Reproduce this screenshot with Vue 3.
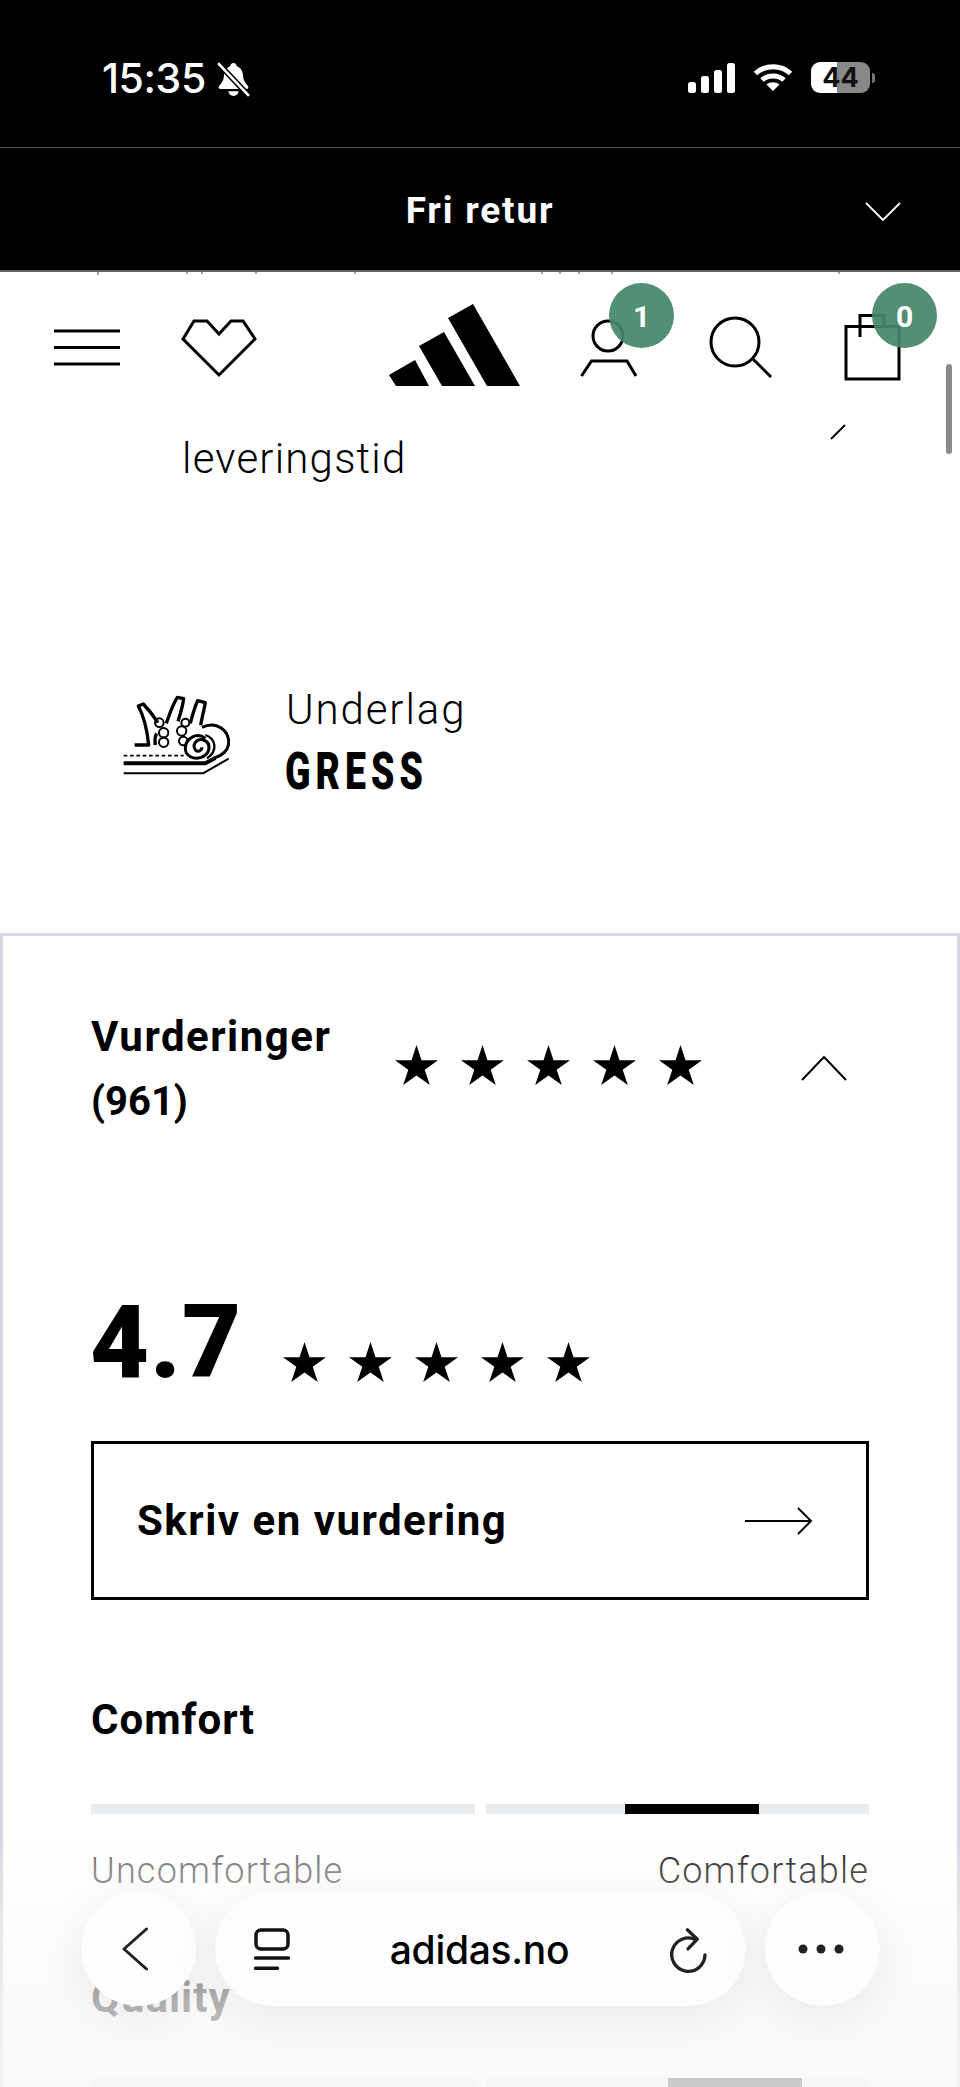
<script setup>
const stars = [1, 2, 3, 4, 5]
</script>

<template>
  <div class="page">
    <div class="topbar">
      <div class="status">
        <div class="status-left">
          <span class="time">15:35</span>
          <svg class="bell" viewBox="0 0 32 34" width="33" height="35">
            <path d="M16 1c2 0 3 1.500 3.300 3.200 4 1.400 5.700 5 6 9.300.2 4 1.700 6.400 4.700 9.800 1 1.500.3 3-1.500 3H3.500c-1.800 0-2.500-1.500-1.500-3 3-3.400 4.500-5.800 4.700-9.800.3-4.300 2-7.900 6-9.300C13 2.500 14 1 16 1z" fill="#fff"/>
            <path d="M11 28.500h10c-.5 3-2.500 4.500-5 4.500s-4.500-1.500-5-4.500z" fill="#fff"/>
            <path d="M1 1l30 32" stroke="#000" stroke-width="5.500"/>
            <path d="M1 1l30 32" stroke="#fff" stroke-width="2.500"/>
          </svg>
        </div>
        <div class="status-right">
          <svg viewBox="0 0 47 30" width="47" height="30">
            <rect x="0" y="19" width="8" height="11" rx="2.500" fill="#fff"/>
            <rect x="13" y="13" width="8" height="17" rx="2.500" fill="#fff"/>
            <rect x="26" y="7" width="8" height="23" rx="2.500" fill="#fff"/>
            <rect x="39" y="0" width="8" height="30" rx="2.500" fill="#fff"/>
          </svg>
          <svg viewBox="0 0 40 28" width="40" height="28">
            <path d="M2.500 10.500C12 1.500 28 1.500 37.500 10.500" fill="none" stroke="#fff" stroke-width="5"/>
            <path d="M9 17c6-5.500 16-5.500 22 0" fill="none" stroke="#fff" stroke-width="5"/>
            <path d="M13.500 21.500c3.500-3 9.500-3 13 0L20 28z" fill="#fff"/>
          </svg>
          <div class="battery">
            <div class="battery-body"><span>44</span></div>
            <i class="battery-nub"></i>
          </div>
        </div>
      </div>
      <div class="promo">
        <span>Fri retur</span>
        <svg class="promo-chevron" viewBox="0 0 36 20" width="36" height="20">
          <path d="M1 2l17 17L35 2" fill="none" stroke="#fff" stroke-width="1.800"/>
        </svg>
      </div>
    </div>

    <header class="nav">
      <svg class="nav-art" viewBox="0 0 960 150" width="960" height="150">
        <path d="M98 0v3M187 0v2M202 0v2M256 0v2M355 0v2M542 0v2M560 0v2M579 0v2M612 0v2M839 0v2" stroke="#666" stroke-width="1.200"/>
        <g fill="none" stroke="#000" stroke-width="3">
          <path d="M54 59h66M54 75.500h66M54 92h66"/>
          <path d="M183 67l11-18h13l12 13 12-13h12l12 18-36 36z"/>
          <circle cx="608" cy="64" r="15"/>
          <path d="M581.500 104l10-15h35.500l9 15"/>
          <circle cx="735" cy="70" r="24"/>
          <path d="M753 87l18 18"/>
          <path d="M846 54.500h53V107h-53z"/>
          <path d="M860 65V43.500h24V55"/>
        </g>
        <g fill="#000">
          <path d="M389 103l26-15 14 26h-33z"/>
          <path d="M419 74l25-14 31 54h-33z"/>
          <path d="M448 46l25-14 47 82h-33z"/>
        </g>
      </svg>
      <span class="badge badge-user">1</span>
      <span class="badge badge-bag">0</span>
      <i class="scroll-thumb"></i>
    </header>

    <main class="content">
      <div class="delivery">
        <span class="delivery-text">leveringstid</span>
        <svg class="slash" viewBox="0 0 16 16" width="16" height="16">
          <path d="M1 15L15 1" stroke="#000" stroke-width="2"/>
        </svg>
      </div>

      <div class="surface">
        <svg class="surface-icon" viewBox="95 105 324 240" width="108" height="80">
          <g fill="none" stroke="#000" stroke-linejoin="round">
            <path d="M133 255h42c-4-40-14-85-31-117l15-6c16 17 32 38 44 56M195 255c-2-15-2-25 4-35" stroke-width="10"/>
            <path d="M228 190c10-28 18-55 33-78l19 4c-3 22-10 46-17 68M300 190c6-24 12-46 22-68l23 6c-4 22-10 45-14 68" stroke-width="10"/>
            <circle cx="207" cy="188" r="13" stroke-width="6"/>
            <circle cx="220" cy="218" r="14" stroke-width="6"/>
            <circle cx="220" cy="247" r="14" stroke-width="6"/>
            <circle cx="285" cy="188" r="12" stroke-width="6"/>
            <circle cx="274" cy="213" r="14" stroke-width="6"/>
            <circle cx="279" cy="243" r="13" stroke-width="6"/>
            <path d="M345 235C320 215 285 235 285 265 285 290 310 298 330 293 360 285 365 250 340 240 318 233 305 255 315 270 322 278 335 272 335 262" stroke-width="9"/>
            <path d="M335 202c45-22 82 12 80 48-3 30-30 40-45 45" stroke-width="9"/>
            <path d="M345 225c30 10 40 45 5 70" stroke-width="7"/>
            <path d="M100 287h180" stroke-width="5" stroke-dasharray="11 8"/>
            <path d="M100 310h245l30-16" stroke-width="12"/>
            <path d="M100 340h238l77-44" stroke-width="6"/>
          </g>
        </svg>
        <div class="surface-text">
          <span class="surface-label">Underlag</span>
          <span class="surface-value">GRESS</span>
        </div>
      </div>

      <section class="card">
        <div class="card-head">
          <h2 class="card-title">Vurderinger <span class="card-count">(961)</span></h2>
          <div class="stars">
            <svg v-for="s in stars" :key="s" viewBox="0 0 43 40" width="43" height="40"><path d="M21.500 0l5 15.300h16.500L29.700 24.700 34.800 40 21.500 30.500 8.200 40l5.100-15.300L0 15.300h16.500z" fill="#000"/></svg>
          </div>
          <svg class="chevron-up" viewBox="0 0 46 26" width="46" height="26">
            <path d="M1 25L23 2l22 23" fill="none" stroke="#000" stroke-width="2"/>
          </svg>
        </div>

        <div class="score">
          <span class="score-num">4.7</span>
          <div class="stars">
            <svg v-for="s in stars" :key="s" viewBox="0 0 43 40" width="43" height="40"><path d="M21.500 0l5 15.300h16.500L29.700 24.700 34.800 40 21.500 30.500 8.200 40l5.100-15.300L0 15.300h16.500z" fill="#000"/></svg>
          </div>
        </div>

        <button class="write">
          <span>Skriv en vurdering</span>
          <svg viewBox="0 0 68 28" width="68" height="28">
            <path d="M0 14h66M53 1l13 13-13 13" fill="none" stroke="#000" stroke-width="2"/>
          </svg>
        </button>

        <h3 class="metric-title">Comfort</h3>
        <div class="meter">
          <div class="meter-seg"></div>
          <div class="meter-seg"><i class="meter-fill"></i></div>
        </div>
        <div class="meter-labels">
          <span class="label-low">Uncomfortable</span>
          <span class="label-high">Comfortable</span>
        </div>

        <h3 class="metric-title metric-quality">Quality</h3>
        <div class="meter meter-second">
          <div class="meter-seg"></div>
          <div class="meter-seg"><i class="meter-fill meter-fill-2"></i></div>
        </div>
      </section>
    </main>

    <div class="fade"></div>

    <div class="browser">
      <div class="bbtn">
        <svg class="back" viewBox="0 0 26 44" width="26" height="44"><path d="M24.500 2L2 22l22.500 20" fill="none" stroke="#222" stroke-width="3" stroke-linecap="round" stroke-linejoin="round"/></svg>
      </div>
      <div class="pill">
        <svg class="tabs" viewBox="0 0 36 42" width="36" height="42">
          <rect x="2" y="2" width="32" height="19" rx="5" fill="none" stroke="#111" stroke-width="3.500"/>
          <path d="M1.500 30h33M1.500 40.200h22" stroke="#111" stroke-width="3.500" stroke-linecap="round"/>
        </svg>
        <span class="url">adidas.no</span>
        <svg class="reload" viewBox="565 130 120 140" width="40" height="47">
          <path d="M673 213A50 50 0 1 1 646 168" fill="none" stroke="#222" stroke-width="10" stroke-linecap="round"/>
          <path d="M620 138l30 28-28 29" fill="none" stroke="#222" stroke-width="10" stroke-linecap="round" stroke-linejoin="round"/>
        </svg>
      </div>
      <div class="bbtn">
        <svg class="dots" viewBox="0 0 46 10" width="46" height="10"><circle cx="5" cy="5" r="4.500" fill="#222"/><circle cx="23" cy="5" r="4.500" fill="#222"/><circle cx="41" cy="5" r="4.500" fill="#222"/></svg>
      </div>
    </div>
  </div>
</template>

<style>
html, body { margin: 0; padding: 0; background: #fff; }
</style>

<style scoped>
.page {
  position: relative;
  width: 960px;
  height: 2087px;
  overflow: hidden;
  background: #fff;
  color: #000;
  font-family: Roboto, "Liberation Sans", sans-serif;
}

.topbar { background: #000; color: #fff; height: 271px; }
.status {
  height: 148px;
  box-sizing: border-box;
  border-bottom: 1px solid #555;
  display: flex;
  justify-content: space-between;
  padding: 60px 85px 0 102px;
}
.status-left { display: flex; align-items: flex-start; gap: 11px; }
.time {
  font-family: Inter, sans-serif;
  font-size: 41px;
  font-weight: 500;
  line-height: 36px;
  letter-spacing: -0.4px;
}
.bell { margin-top: 2px; }
.status-right { display: flex; align-items: flex-start; gap: 18px; padding-top: 3px; }
.battery { display: flex; align-items: center; gap: 2px; margin-top: -1px; }
.battery-body {
  width: 59px;
  height: 31px;
  border-radius: 9px;
  background: linear-gradient(90deg, #fff 0 26px, #888 26px);
  color: #111;
  font: 700 27px/31px Inter, sans-serif;
  text-align: center;
}
.battery-nub { width: 3px; height: 10px; background: #777; border-radius: 0 3px 3px 0; }

.promo {
  position: relative;
  height: 122px;
  display: flex;
  align-items: center;
  justify-content: center;
  font-size: 37px;
  font-weight: 700;
  letter-spacing: 1.800px;
  padding-top: 2px;
  box-sizing: border-box;
}
.promo-chevron { position: absolute; right: 59px; top: 53px; }

.nav {
  position: relative;
  height: 129px;
  border-top: 2px solid #666;
  margin-top: -1px;
  background: #fff;
  z-index: 2;
}
.nav-art { position: absolute; left: 0; top: 0; overflow: visible; }
.badge {
  position: absolute;
  top: 11px;
  width: 65px;
  height: 65px;
  border-radius: 50%;
  background: rgba(70, 135, 105, 0.93);
  color: #fff;
  font-size: 30px;
  font-weight: 700;
  line-height: 68px;
  text-align: center;
}
.badge-user { left: 609px; }
.badge-bag { left: 872px; }
.scroll-thumb {
  position: absolute;
  left: 946px;
  top: 92px;
  width: 6px;
  height: 90px;
  border-radius: 3px;
  background: #8a8a8a;
}

.delivery { position: relative; height: 280px; }
.delivery-text {
  position: absolute;
  left: 182px;
  top: 33px;
  font-size: 42px;
  font-weight: 300;
  line-height: 50px;
  letter-spacing: 1.200px;
}
.slash { position: absolute; left: 830px; top: 23px; }

.surface {
  display: flex;
  align-items: flex-start;
  gap: 56px;
  height: 252px;
  box-sizing: border-box;
  padding-left: 122px;
}
.surface-icon { margin-top: 14px; }
.surface-text { display: flex; flex-direction: column; }
.surface-label { font-size: 42px; font-weight: 300; line-height: 58px; letter-spacing: 1.900px; }
.surface-value {
  display: inline-block;
  font-size: 52px;
  font-weight: 900;
  line-height: 66px;
  letter-spacing: 7px;
  transform: scaleX(0.72);
  transform-origin: left center;
  margin-left: -1px;
}

.card {
  box-sizing: border-box;
  border: 3px solid #d5d8df;
  padding: 0 88px 200px;
}
.card-head { position: relative; height: 210px; }
.card-title {
  position: absolute;
  left: 0;
  top: 69px;
  width: 270px;
  margin: 0;
  font-size: 42px;
  font-weight: 700;
  line-height: 64px;
  letter-spacing: 1.500px;
}
.card-count { font-size: 40px; letter-spacing: 0; }
.stars { display: flex; gap: 23px; }
.card-head .stars { position: absolute; left: 304px; top: 109px; }
.chevron-up { position: absolute; left: 710px; top: 119px; }

.score { display: flex; align-items: flex-end; gap: 41px; margin-top: 146px; height: 90px; }
.score-num {
  font-size: 102px;
  font-weight: 900;
  line-height: 90px;
  letter-spacing: 1px;
  margin: 0 0 -5px -1px;
}

.write {
  display: flex;
  align-items: center;
  justify-content: space-between;
  width: 100%;
  height: 159px;
  box-sizing: border-box;
  margin-top: 59px;
  padding: 0 53px 0 43px;
  background: #fff;
  border: 3px solid #000;
  border-radius: 0;
  font: 700 42px Roboto, sans-serif;
  letter-spacing: 1.500px;
  color: #000;
}
.metric-title {
  margin: 96px 0 0;
  font-size: 42px;
  font-weight: 700;
  line-height: 48px;
  letter-spacing: 1px;
}
.meter { display: grid; grid-template-columns: 1fr 1fr; gap: 11px; margin-top: 60px; }
.meter-seg { position: relative; height: 10px; background: #eaedf0; }
.meter-fill { position: absolute; left: 139px; width: 134px; top: 0; bottom: 0; background: #000; }
.meter-fill-2 { left: 182px; }
.meter-labels {
  display: flex;
  justify-content: space-between;
  margin-top: 35px;
  font-size: 36px;
  font-weight: 300;
  line-height: 44px;
  letter-spacing: 1.200px;
}
.label-low { color: #666; }
.label-high { color: #111; }
.metric-quality { margin-top: 81px; }
.meter-second { margin-top: 56px; }

.fade {
  position: absolute;
  left: 0;
  right: 0;
  top: 1840px;
  bottom: 0;
  background: linear-gradient(180deg, rgba(250,250,250,0) 0, rgba(250,250,250,0.25) 30px, rgba(248,248,248,0.72) 160px, rgba(248,248,248,0.82) 247px);
  z-index: 3;
}

.browser {
  position: absolute;
  left: 81px;
  top: 1891px;
  display: flex;
  gap: 19px;
  z-index: 4;
}
.bbtn, .pill {
  height: 115px;
  background: #fdfdfd;
  box-shadow: 0 10px 50px rgba(0, 0, 0, 0.07);
  display: flex;
  align-items: center;
}
.bbtn { width: 115px; border-radius: 50%; justify-content: center; }
.back { margin-right: 8px; }
.dots { margin-right: 3px; }
.pill {
  width: 531px;
  border-radius: 58px;
  display: grid;
  grid-template-columns: 1fr auto 1fr;
  padding: 0 37px 0 39px;
  box-sizing: border-box;
}
.reload { justify-self: end; margin-top: 4px; }
.url {
  font-family: Inter, sans-serif;
  font-size: 39px;
  font-weight: 450;
  letter-spacing: -0.3px;
  position: relative;
  top: 1px;
  left: -2px;
}
</style>
